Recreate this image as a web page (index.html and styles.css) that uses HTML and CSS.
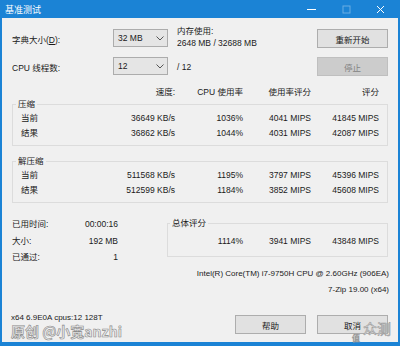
FILE: index.html
```html
<html>
  <head>
    <link rel="stylesheet" href="styles.css">
  </head>
  <body>
    <div class="window">
      <div class="titlebar">
        <span class="title">基准测试</span>
        <div class="controls">
          <span class="ctl"><svg width="9" height="9" viewBox="0 0 9 9"><path d="M0 4.5h9" stroke="#fff" stroke-width="1"/></svg></span>
          <span class="ctl"><svg width="9" height="9" viewBox="0 0 9 9"><rect x="1" y="1" width="7" height="7" fill="none" stroke="rgba(255,255,255,0.35)" stroke-width="1"/></svg></span>
          <span class="ctl"><svg width="9" height="9" viewBox="0 0 9 9"><path d="M1 1l7 7M8 1l-7 7" stroke="#fff" stroke-width="1"/></svg></span>
        </div>
      </div>
      <div class="client">
        <div class="top">
          <span class="lbl">字典大小(<u>D</u>):</span>
          <div class="combo">32 MB <svg width="8" height="5" viewBox="0 0 8 5"><path d="M0.5 0.5l3.5 3.5 3.5-3.5" fill="none" stroke="#555" stroke-width="1"/></svg></div>
          <div class="mem">内存使用:<br>2648 MB / 32688 MB</div>
          <button class="btn">重新开始</button>
          <span class="lbl">CPU 线程数:</span>
          <div class="combo">12 <svg width="8" height="5" viewBox="0 0 8 5"><path d="M0.5 0.5l3.5 3.5 3.5-3.5" fill="none" stroke="#555" stroke-width="1"/></svg></div>
          <div class="threads">/ 12</div>
          <button class="btn" disabled>停止</button>
        </div>

        <div class="row head">
          <span></span><span>速度:</span><span>CPU 使用率</span><span>使用率评分</span><span>评分</span>
        </div>

        <fieldset class="group">
          <legend>压缩</legend>
          <div class="row"><span>当前</span><span>36649 KB/s</span><span>1036%</span><span>4041 MIPS</span><span>41845 MIPS</span></div>
          <div class="row"><span>结果</span><span>36862 KB/s</span><span>1044%</span><span>4031 MIPS</span><span>42087 MIPS</span></div>
        </fieldset>

        <fieldset class="group">
          <legend>解压缩</legend>
          <div class="row"><span>当前</span><span>511568 KB/s</span><span>1195%</span><span>3797 MIPS</span><span>45396 MIPS</span></div>
          <div class="row"><span>结果</span><span>512599 KB/s</span><span>1184%</span><span>3852 MIPS</span><span>45608 MIPS</span></div>
        </fieldset>

        <div class="bottom">
          <div class="stats">
            <span>已用时间:</span><span class="val">00:00:16</span>
            <span>大小:</span><span class="val">192 MB</span>
            <span>已通过:</span><span class="val">1</span>
          </div>
          <fieldset class="total">
            <legend>总体评分</legend>
            <div class="trow"><span>1114%</span><span>3941 MIPS</span><span>43848 MIPS</span></div>
          </fieldset>
        </div>

        <div class="info">Intel(R) Core(TM) i7-9750H CPU @ 2.60GHz (906EA)</div>
        <div class="info">7-Zip 19.00 (x64)</div>

        <div class="footer">
          <span class="build">x64 6.9E0A cpus:12 128T</span>
          <div class="actions">
            <button class="btn">帮助</button>
            <button class="btn">取消</button>
          </div>
        </div>
      </div>

      <div class="mark">原创 @小宽anzhi</div>
      <div class="logo"><span class="zhi">值</span><span>众测</span></div>
    </div>
  </body>
</html>
```

FILE: styles.css
```css
html, body {
  margin: 0;
}

body {
  width: 400px;
  height: 346px;
  font-family: "Liberation Sans", "Noto Sans CJK SC", sans-serif;
  font-size: 8.5px;
  color: #1a1a1a;
}

.window {
  position: relative;
  width: 400px;
  height: 346px;
  box-sizing: border-box;
  padding: 0 2px 4px;
  background: #1b83d5;
  display: flex;
  flex-direction: column;
  overflow: hidden;
}

.titlebar {
  height: 18px;
  flex-shrink: 0;
  display: flex;
  align-items: center;
  color: #fff;
}

.title {
  padding-left: 3px;
  font-size: 9px;
}

.controls {
  margin-left: auto;
  display: flex;
  height: 18px;
}

.ctl {
  width: 34.5px;
  display: flex;
  align-items: center;
  justify-content: center;
}

.client {
  flex: 1;
  min-height: 0;
  background: #f0f0f0;
  padding: 11px 10px 8px;
  display: flex;
  flex-direction: column;
}

/* top controls */
.top {
  display: grid;
  grid-template-columns: 101px 55px 149px 71px;
  grid-template-rows: 19px 19px;
  row-gap: 9px;
}

.lbl {
  align-self: center;
}

.combo {
  height: 18px;
  box-sizing: border-box;
  border: 1px solid #acacac;
  background: #e5e5e5;
  padding: 0 3px 0 4px;
  display: flex;
  align-items: center;
  justify-content: space-between;
}

.mem {
  padding-left: 9px;
  line-height: 12px;
  margin-top: -4px;
}

.threads {
  padding-left: 9px;
  align-self: center;
}

.btn {
  font: inherit;
  height: 19px;
  padding: 0;
  border: 1px solid #adadad;
  background: #e1e1e1;
  color: #1a1a1a;
}

.btn:disabled {
  background: #cccccc;
  border-color: #bfbfbf;
  color: #838383;
}

/* result table */
.row {
  display: grid;
  grid-template-columns: 1fr 80px 68px 68px 68px;
}

.row span + span {
  text-align: right;
}

.head {
  margin-top: 10px;
  padding: 0 9px;
  line-height: 12px;
}

.group {
  margin: 0;
  min-inline-size: 0;
  border: 1px solid #dcdcdc;
  padding: 1px 8px 4px;
  line-height: 15px;
}

.group legend,
.total legend {
  padding: 0 2px;
  line-height: 12px;
}

.group legend {
  margin-left: -5px;
}

.group + .group {
  margin-top: 9px;
}

.bottom {
  display: flex;
  align-items: flex-start;
  margin-top: 13px;
}

.stats {
  width: 106px;
  margin-right: 49px;
  display: grid;
  grid-template-columns: 1fr auto;
  line-height: 16.5px;
}

.val {
  text-align: right;
}

.total {
  flex: 1;
  margin: 1px 0 0;
  min-inline-size: 0;
  border: 1px solid #dcdcdc;
  padding: 4px 8px 7px 0;
  line-height: 16px;
}

.total legend {
  margin-left: 2px;
}

.trow {
  display: grid;
  grid-template-columns: 68px 68px 68px;
  justify-content: end;
  text-align: right;
}

.info {
  text-align: right;
  font-size: 8px;
  line-height: 16.5px;
  margin-right: -1px;
}

/* footer */
.footer {
  margin-top: auto;
  display: flex;
  align-items: flex-start;
}

.build {
  font-size: 8px;
  line-height: 11px;
  margin: -3px 0 0 -1px;
}

.actions {
  margin-left: auto;
  display: flex;
  gap: 11px;
}

.actions .btn {
  width: 71px;
}

/* image watermarks lying over the dialog */
.mark {
  position: absolute;
  left: 11px;
  top: 323px;
  font-family: "Noto Sans CJK SC", sans-serif;
  font-size: 14px;
  line-height: 16px;
  font-weight: bold;
  color: #ececec;
  -webkit-text-stroke: 0.6px #8a8a8a;
}

.logo {
  position: absolute;
  right: 9px;
  top: 320px;
  display: flex;
  align-items: flex-end;
  gap: 3px;
  font-family: "Noto Sans CJK SC", sans-serif;
  font-size: 14px;
  line-height: 17px;
  color: #f4f4f4;
  -webkit-text-stroke: 0.6px #9a9a9a;
}

.zhi {
  font-size: 8px;
  line-height: 9px;
  margin-bottom: -5px;
}
```
